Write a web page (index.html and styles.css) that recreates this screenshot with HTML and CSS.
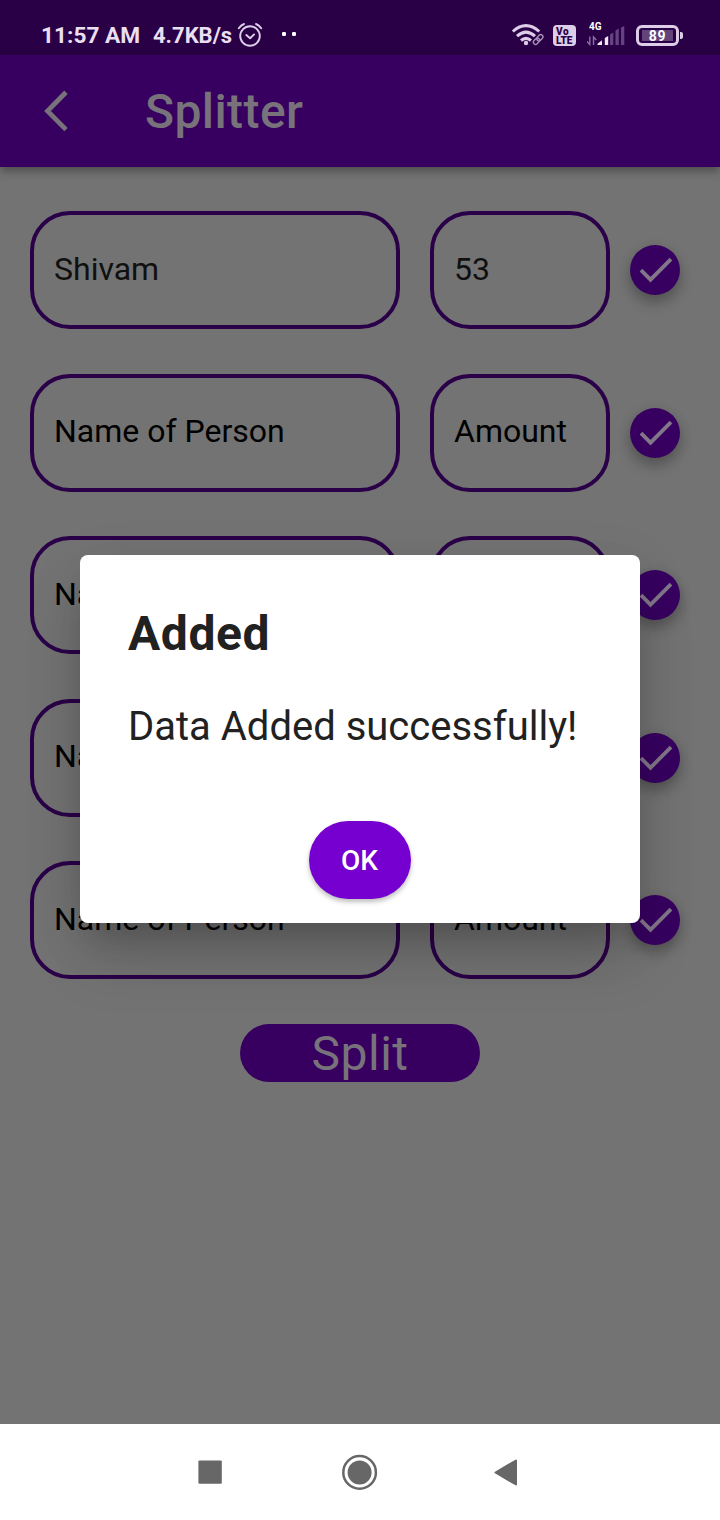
FILE: index.html
```html
<!DOCTYPE html>
<html lang="en">
<head>
<meta charset="utf-8">
<title>Splitter</title>
<link rel="stylesheet" href="styles.css">
</head>
<body>
<div class="screen">
  <header class="status">
    <span class="clock">11:57 AM</span>
    <span class="speed">4.7KB/s</span>
    <svg class="alarm" width="26" height="26" viewBox="0 0 26 26" fill="none" stroke="#dfd0ea" stroke-width="1.9" stroke-linecap="round" stroke-linejoin="round"><circle cx="13" cy="14" r="9.8"/><path d="M1.8 6.2Q4 3 7 2M24.2 6.2Q22 3 19 2M9.3 13l3.8 3.2 4-3.8"/></svg>
    <svg class="dots" width="16" height="6" viewBox="0 0 16 6" fill="#fff"><rect x="1" y="1" width="4" height="4" rx="1.2"/><rect x="11" y="1" width="4" height="4" rx="1.2"/></svg>
    <svg class="wifi" width="34" height="24" viewBox="0 0 34 24" fill="none" stroke="#ddcde8" stroke-width="3"><path d="M1.8 8.5Q15 -3.3 28.2 8.5M6 13.2Q15 5 24 13.2M10 17.5Q15 13.2 20 17.5"/><circle cx="15" cy="20" r="2.2" fill="#ddcde8" stroke="none"/><g stroke="#a78fb9" stroke-width="1.4"><rect x="22" y="16" width="7" height="4.4" rx="2.2" transform="rotate(-45 25.5 18.2)"/><rect x="25.3" y="12.6" width="7" height="4.4" rx="2.2" transform="rotate(-45 28.8 14.8)"/></g></svg>
    <span class="volte"><span class="vo">Vo</span><span>LTE</span></span>
    <span class="signal"><span class="net">4G</span>
      <svg width="40" height="20" viewBox="0 0 40 20"><path d="M2.8 10.5v8L0 15.5M6.5 19v-8l2.8 3" fill="none" stroke="#8b70a1" stroke-width="1.4"/><path d="M10.5 19v-1.3L15 14.2V19zM17.8 19v-7l3.4-2v9z" fill="#f1e8f6"/><path d="M23 19V8.5l3.3-2V19zM28.5 19V4.5l3.3-2V19zM34 19V1.5L37.3 0V19z" fill="#654281"/></svg>
    </span>
    <span class="battery"><span class="level">89</span></span>
  </header>
  <div class="appbar">
    <svg class="back" width="26" height="42" viewBox="0 0 26 42" fill="none" stroke="#78737b" stroke-width="4.8"><path d="M23 2.2 4.5 21 23 39.6"/></svg>
    <h1>Splitter</h1>
  </div>
  <main class="list">
    <div class="row"><div class="field name filled">Shivam</div><div class="field amount filled">53</div><button class="check"><svg width="34" height="26" viewBox="0 0 34 26"><path d="M2 13.2 11.5 22.7 32 2.2"/></svg></button></div>
    <div class="row"><div class="field name">Name of Person</div><div class="field amount">Amount</div><button class="check"><svg width="34" height="26" viewBox="0 0 34 26"><path d="M2 13.2 11.5 22.7 32 2.2"/></svg></button></div>
    <div class="row"><div class="field name">Name of Person</div><div class="field amount">Amount</div><button class="check"><svg width="34" height="26" viewBox="0 0 34 26"><path d="M2 13.2 11.5 22.7 32 2.2"/></svg></button></div>
    <div class="row"><div class="field name">Name of Person</div><div class="field amount">Amount</div><button class="check"><svg width="34" height="26" viewBox="0 0 34 26"><path d="M2 13.2 11.5 22.7 32 2.2"/></svg></button></div>
    <div class="row"><div class="field name">Name of Person</div><div class="field amount">Amount</div><button class="check"><svg width="34" height="26" viewBox="0 0 34 26"><path d="M2 13.2 11.5 22.7 32 2.2"/></svg></button></div>
    <button class="split">Split</button>
  </main>
  <nav class="navbar">
    <svg width="24" height="24" viewBox="0 0 24 24"><rect x="0.4" y="0.4" width="23.4" height="23.4" rx="1.2" fill="#676767"/></svg>
    <svg width="36" height="36" viewBox="0 0 36 36"><circle cx="17.6" cy="18.4" r="16.3" fill="none" stroke="#676767" stroke-width="2.5"/><circle cx="17.6" cy="18.4" r="12" fill="#676767"/></svg>
    <svg width="24" height="27" viewBox="0 0 24 27"><path d="M22 1.5v24L1.5 13.5z" fill="#676767" stroke="#676767" stroke-width="2" stroke-linejoin="round"/></svg>
  </nav>
  <section class="dialog" role="dialog">
    <h2>Added</h2>
    <p>Data Added successfully!</p>
    <button class="ok">OK</button>
  </section>
</div>
</body>
</html>
```
FILE: styles.css
```css
* { box-sizing: border-box; }
body { margin: 0; font-family: Roboto, "Liberation Sans", sans-serif; }
button { border: 0; padding: 0; font-family: inherit; display: flex; align-items: center; justify-content: center; }
h1, h2, p { margin: 0; }
.screen { position: relative; width: 720px; height: 1520px; background: #737373; display: flex; flex-direction: column; overflow: hidden; }
.status { height: 55px; background: #290045; color: #eadff1; display: flex; align-items: center; padding: 15px 37px 0 41px; flex: none; white-space: nowrap; }
.clock { width: 112px; font-size: 22.7px; font-weight: 700; }
.speed { width: 83.5px; font-size: 22px; font-weight: 700; }
.alarm { margin-top: -1px; }
.dots { margin: -3px auto 0 18.5px; }
.wifi { margin-right: 8px; }
.volte { width: 23px; height: 21px; border-radius: 4px; background: #ddcde8; color: #290045; font-size: 10px; line-height: 9px; font-weight: 900; padding: 2px 0 0 3px; display: flex; flex-direction: column; margin-right: 12px; }
.vo { letter-spacing: .6px; }
.signal { width: 40px; height: 30px; margin: -6px 8px 0 0; display: flex; flex-direction: column; }
.net { font-size: 10px; line-height: 10px; font-weight: 700; padding: 5px 0 0 1px; color: #fff; }
.signal svg { margin: -6px 0 0 -1px; flex: none; }
.battery { width: 43px; height: 21px; border: 3px solid #ddcde8; border-radius: 6px; padding: 2px; margin-right: 4px; display: flex; position: relative; }
.battery::after { content: ""; position: absolute; right: -6.5px; top: 4px; width: 3px; height: 7px; background: #ddcde8; border-radius: 0 2px 2px 0; }
.level { flex: 1; margin: 0 1px; background: #62447b; color: #fff; font-size: 14px; font-weight: 700; line-height: 12px; text-align: center; letter-spacing: .8px; }
.appbar { height: 112px; flex: none; background: #370060; display: flex; align-items: center; padding-left: 43px; box-shadow: 0 4px 9px rgba(0,0,0,.34); }
.appbar h1 { margin: 2px 0 0 76px; font-size: 48px; line-height: 56px; font-weight: 500; letter-spacing: .4px; color: #78737b; }
.list { flex: 1; padding: 22.2px 40px 0 30px; display: flex; flex-direction: column; }
.row { height: 162.5px; display: flex; align-items: center; flex: none; }
.field { height: 118px; border: 4px solid #2a0048; border-radius: 40px; padding: 0 0 3px 20px; display: flex; align-items: center; font-size: 32px; color: #000; white-space: nowrap; }
.filled { color: #101010; }
.name { width: 370px; margin-right: 30px; }
.amount { width: 180px; margin-right: 20px; }
.check { width: 50px; height: 50px; border-radius: 50%; background: #370060; box-shadow: 0 8px 14px rgba(0,0,0,.24), 0 2px 14px rgba(0,0,0,.08); }
.check svg { margin-left: 1px; }
.check path { fill: none; stroke: #817789; stroke-width: 3.8; }
.split { align-self: center; width: 240px; height: 58px; margin: 22.3px 0 0 10px; border-radius: 29px; background: #370060; color: #78737b; font-size: 48px; line-height: 58px; letter-spacing: .5px; padding-top: 2px; }
.navbar { height: 96px; flex: none; background: #fff; display: flex; align-items: center; padding: 0 0 0 198px; }
.navbar svg:nth-child(2) { margin: 0 116px 0 120px; }
.dialog { position: absolute; left: 80px; top: 555.4px; width: 560px; height: 368px; background: #fff; border-radius: 8px; padding: 51px 48px 24.5px; display: flex; flex-direction: column; color: #212121; box-shadow: 0 22px 30px -14px rgba(0,0,0,.18), 0 38px 60px 0 rgba(0,0,0,.12), 0 14px 60px 0 rgba(0,0,0,.08); }
.dialog h2 { font-size: 48px; line-height: 56px; font-weight: 700; letter-spacing: .6px; }
.dialog p { margin-top: 41px; font-size: 40px; line-height: 47px; white-space: nowrap; }
.ok { align-self: center; margin-top: auto; width: 102px; height: 78px; border-radius: 39px; background: #7500cf; color: #fff; font-size: 28px; font-weight: 500; padding: 1px 1px 0 0; box-shadow: 0 3px 5px rgba(0,0,0,.26); }
```
